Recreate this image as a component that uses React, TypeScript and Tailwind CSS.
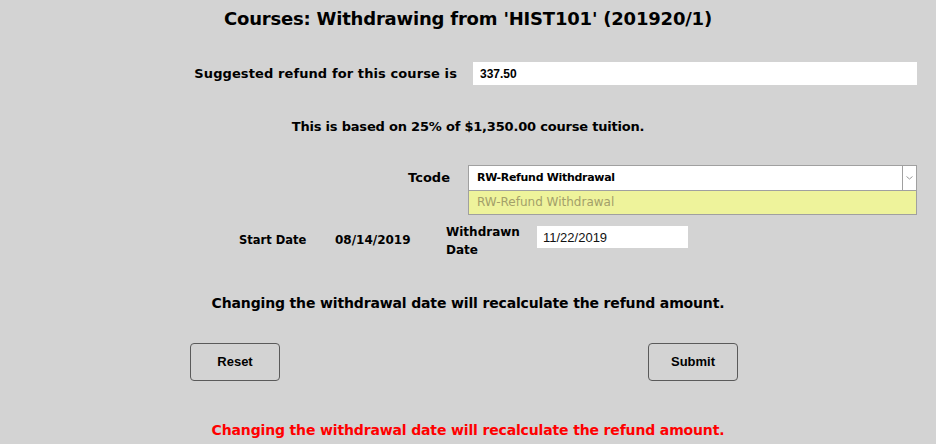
import { useState } from 'react';

const gothic = { fontFamily: '"DejaVu Sans", sans-serif' };
const arial = { fontFamily: '"Liberation Sans", Arial, sans-serif' };

export default function App() {
  const [refund, setRefund] = useState('337.50');
  const [withdrawn, setWithdrawn] = useState('11/22/2019');

  return (
    <div className="w-[936px] h-[444px] bg-[#d3d3d3] text-black overflow-hidden" style={gothic}>
      <h1 className="pt-[6px] h-[34px] text-center text-[18px] font-bold leading-[26px] tracking-[-0.2px]">
        Courses: Withdrawing from 'HIST101' (201920/1)
      </h1>

      {/* refund */}
      <div className="mt-[28px] flex items-center h-[23px]">
        <div className="w-[457px] text-right text-[13px] font-bold tracking-[0.1px]">Suggested refund for this course is</div>
        <input
          value={refund}
          onChange={(e) => setRefund(e.target.value)}
          className="ml-[16px] w-[444px] h-[23px] bg-white px-[7px] text-[12px] font-bold outline-none"
          style={arial}
        />
      </div>

      <p className="mt-[32px] text-center text-[13px] font-bold leading-[20px] tracking-[-0.2px]">
        This is based on 25% of $1,350.00 course tuition.
      </p>

      {/* tcode */}
      <div className="mt-[28px] flex items-start">
        <div className="w-[450px] text-right text-[13px] font-bold leading-[26px]">Tcode</div>
        <div className="ml-[18px] w-[449px]">
          <div className="flex h-[26px] border border-[#a0a0a0] bg-white">
            <div className="flex-1 px-[8px] text-[11px] font-bold leading-[24px] tracking-[-0.3px]">RW-Refund Withdrawal</div>
            <div className="w-[14px] border-l border-[#a0a0a0] flex items-center justify-center">
              <svg width="7" height="4" viewBox="0 0 7 4">
                <path d="M0.5 0.5 L3.5 3 L6.5 0.5" fill="none" stroke="#9a9a9a" strokeWidth="1" />
              </svg>
            </div>
          </div>
          <div className="h-[24px] border border-t-0 border-[#a0a0a0] bg-[#eef39b] px-[8px] text-[12px] leading-[22px] text-[#a3a06a]">
            RW-Refund Withdrawal
          </div>
        </div>
      </div>

      {/* dates */}
      <div className="mt-[8px] flex items-start h-[40px]">
        <div className="ml-[239px] w-[96px] text-[11.5px] font-bold leading-[18px] pt-[8px]">Start Date</div>
        <div className="w-[111px] text-[12px] font-bold leading-[18px] pt-[8px]">08/14/2019</div>
        <div className="w-[91px] text-[12px] font-bold leading-[18px]">
          Withdrawn
          <br />
          Date
        </div>
        <input
          value={withdrawn}
          onChange={(e) => setWithdrawn(e.target.value)}
          className="mt-[3px] w-[151px] h-[22px] bg-white px-[6px] text-[13px] outline-none text-[#111]"
          style={arial}
        />
      </div>

      <p className="mt-[29px] text-center text-[14px] font-bold leading-[22px] tracking-[-0.15px]">
        Changing the withdrawal date will recalculate the refund amount.
      </p>

      <div className="mt-[29px] ml-[190px] w-[548px] flex justify-between">
        {['Reset', 'Submit'].map((label) => (
          <button
            key={label}
            className="w-[90px] h-[38px] rounded-[4px] border border-[#5a5a5a] bg-transparent text-[13px] font-bold"
            style={arial}
          >
            {label}
          </button>
        ))}
      </div>

      <p className="mt-[38px] text-center text-[14px] font-bold leading-[22px] tracking-[-0.15px] text-[#ff0000]">
        Changing the withdrawal date will recalculate the refund amount.
      </p>
    </div>
  );
}
